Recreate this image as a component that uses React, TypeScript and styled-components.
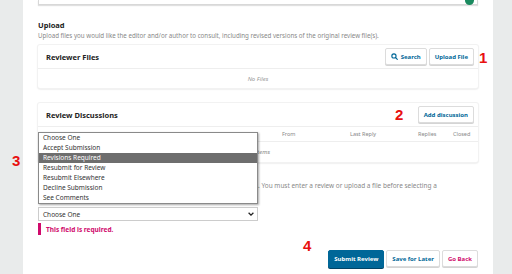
import styled, { createGlobalStyle } from "styled-components";

const GlobalStyle = createGlobalStyle`
  html, body {
    margin: 0;
    padding: 0;
    background: #e9ebeb;
    font-family: "Noto Sans", "Open Sans", sans-serif;
    color: #222;
  }
`;

const Page = styled.div`
  display: grid;
  grid-template-columns: 23px 470px 19px;
  height: 274px;
  overflow: hidden;
`;

const Side = styled.div`
  background: #e9ebeb;
  position: relative;
`;

const Main = styled.main`
  background: #fff;
  padding: 0 15px;
  position: relative;
`;

/* annotations drawn on top of the screenshot */
const Mark = styled.span<{ $x: number; $y: number }>`
  position: absolute;
  left: ${(p) => p.$x}px;
  top: ${(p) => p.$y}px;
  color: #e81010;
  font-family: "Liberation Sans", Arial, sans-serif;
  font-size: 15px;
  font-weight: 700;
  line-height: 15px;
  z-index: 30;
`;

const TopBox = styled.div`
  height: 4px;
  border: 1px solid #d8d8d8;
  border-top: none;
  box-shadow: 0 1px 1px rgba(0, 0, 0, 0.12);
  position: relative;
`;

const Dot = styled.span`
  position: absolute;
  right: 3px;
  top: -4px;
  width: 9px;
  height: 9px;
  border-radius: 50%;
  background: #1b8a5f;
`;

const Section = styled.section<{ $top: number }>`
  margin-top: ${(p) => p.$top}px;
`;

const Heading = styled.h3`
  margin: 0;
  font-size: 7.5px;
  line-height: 10px;
  font-weight: 700;
  color: #222;
`;

const Desc = styled.p<{ $size?: number }>`
  margin: 1px 0 0;
  font-size: ${(p) => p.$size ?? 6.2}px;
  line-height: 10px;
  color: #888;
`;

const Panel = styled.div<{ $top: number }>`
  margin-top: ${(p) => p.$top}px;
  background: #fff;
  border-radius: 2px;
  box-shadow: 0 0 0 1px #f2f2f2, 0 1px 2px rgba(0, 0, 0, 0.2);
`;

const PanelHeader = styled.div`
  height: 23px;
  display: flex;
  align-items: center;
  padding: 0 4px 0 8px;
  border-bottom: 1px solid #eee;
`;

const PanelTitle = styled.div`
  flex: 1;
  font-size: 7.5px;
  font-weight: 700;
  color: #222;
`;

const Actions = styled.div`
  display: flex;
  gap: 2px;
`;

const Button = styled.button<{ $variant?: "primary" | "danger" }>`
  height: ${(p) => (p.$variant === "primary" ? 18 : 17)}px;
  padding: 0 5px;
  display: inline-flex;
  align-items: center;
  gap: 3px;
  font-family: inherit;
  font-size: 6px;
  font-weight: 700;
  border-radius: 2px;
  cursor: pointer;
  color: ${(p) =>
    p.$variant === "primary" ? "#fff" : p.$variant === "danger" ? "#d00a6c" : "#006798"};
  background: ${(p) => (p.$variant === "primary" ? "#006798" : "#fff")};
  border: 1px solid ${(p) => (p.$variant === "primary" ? "#006798" : "#dcdcdc")};
  box-shadow: 0 1px 0 ${(p) => (p.$variant === "primary" ? "#004466" : "#d4d4d4")};
`;

const EmptyRow = styled.div`
  height: 19px;
  display: flex;
  align-items: center;
  justify-content: center;
  font-size: 6px;
  font-style: italic;
  color: #999;
`;

const ColumnRow = styled.div`
  height: 14px;
  display: grid;
  grid-template-columns: 236px 68px 68px 35px 1fr;
  align-items: center;
  padding: 0 8px;
  border-bottom: 1px solid #eee;
  font-size: 5.5px;
  color: #888;
`;

const ItemsRow = styled.div`
  height: 20px;
  display: flex;
  align-items: center;
  justify-content: center;
  font-size: 6px;
  font-style: italic;
  color: #888;
`;

const Field = styled.div`
  position: relative;
  width: 220px;
  margin-top: 6px;
`;

const SelectBox = styled.div`
  height: 14px;
  box-sizing: border-box;
  border: 1px solid #ccc;
  display: flex;
  align-items: center;
  justify-content: space-between;
  padding: 0 3px 0 4px;
  font-size: 6.5px;
  color: #333;
  background: #fff;
`;

const Options = styled.ul`
  position: absolute;
  left: 0;
  right: 0;
  bottom: calc(100% + 3px);
  margin: 0;
  padding: 0;
  list-style: none;
  background: #fff;
  border: 1px solid #8a8a8a;
  box-shadow: 1px 1px 2px rgba(0, 0, 0, 0.35);
  z-index: 20;
`;

const Option = styled.li<{ $active?: boolean }>`
  height: 10px;
  line-height: 10px;
  padding: 0 4px;
  font-size: 6.5px;
  color: ${(p) => (p.$active ? "#fff" : "#333")};
  background: ${(p) => (p.$active ? "#6e6e6e" : "transparent")};
`;

const Error = styled.div`
  margin-top: 2px;
  height: 12px;
  display: flex;
  align-items: center;
  border-left: 3px solid #d00a6c;
  padding-left: 5px;
  font-size: 6.5px;
  font-weight: 700;
  color: #d00a6c;
`;

const Footer = styled.div`
  margin-top: 15px;
  display: flex;
  justify-content: flex-end;
  gap: 2px;
`;

const SearchIcon = () => (
  <svg width="7" height="7" viewBox="0 0 10 10" fill="none" stroke="#006798" strokeWidth="1.6">
    <circle cx="4.2" cy="4.2" r="3" />
    <path d="M6.4 6.4 L9 9" strokeLinecap="round" />
  </svg>
);

const Chevron = () => (
  <svg width="6" height="4" viewBox="0 0 6 4" fill="none" stroke="#222" strokeWidth="1.3">
    <path d="M0.6 0.8 L3 3.1 L5.4 0.8" />
  </svg>
);

const options = [
  "Choose One",
  "Accept Submission",
  "Revisions Required",
  "Resubmit for Review",
  "Resubmit Elsewhere",
  "Decline Submission",
  "See Comments",
];

export default function App() {
  return (
    <>
      <GlobalStyle />
      <Page>
        <Side>
          <Mark $x={12} $y={153}>3</Mark>
        </Side>
        <Main>
          <Mark $x={456} $y={50}>1</Mark>
          <Mark $x={372} $y={107}>2</Mark>
          <Mark $x={280} $y={238}>4</Mark>

          <TopBox>
            <Dot />
          </TopBox>

          <Section $top={15}>
            <Heading>Upload</Heading>
            <Desc>
              Upload files you would like the editor and/or author to consult, including revised
              versions of the original review file(s).
            </Desc>
          </Section>

          <Panel $top={4}>
            <PanelHeader>
              <PanelTitle>Reviewer Files</PanelTitle>
              <Actions>
                <Button>
                  <SearchIcon />
                  Search
                </Button>
                <Button>Upload File</Button>
              </Actions>
            </PanelHeader>
            <EmptyRow>No Files</EmptyRow>
          </Panel>

          <Panel $top={15}>
            <PanelHeader>
              <PanelTitle>Review Discussions</PanelTitle>
              <Button>Add discussion</Button>
            </PanelHeader>
            <ColumnRow>
              <span>Name</span>
              <span>From</span>
              <span>Last Reply</span>
              <span>Replies</span>
              <span>Closed</span>
            </ColumnRow>
            <ItemsRow>No Items</ItemsRow>
          </Panel>

          <Section $top={8}>
            <Heading>Recommendation</Heading>
            <Desc $size={6.45}>
              Select a recommendation and submit the review to complete the process. You must
              enter a review or upload a file before selecting a recommendation.
            </Desc>
            <Field>
              <Options>
                {options.map((o) => (
                  <Option key={o} $active={o === "Revisions Required"}>
                    {o}
                  </Option>
                ))}
              </Options>
              <SelectBox>
                <span>Choose One</span>
                <Chevron />
              </SelectBox>
            </Field>
            <Error>This field is required.</Error>
          </Section>

          <Footer>
            <Button $variant="primary">Submit Review</Button>
            <Button>Save for Later</Button>
            <Button $variant="danger">Go Back</Button>
          </Footer>
        </Main>
      </Page>
    </>
  );
}
